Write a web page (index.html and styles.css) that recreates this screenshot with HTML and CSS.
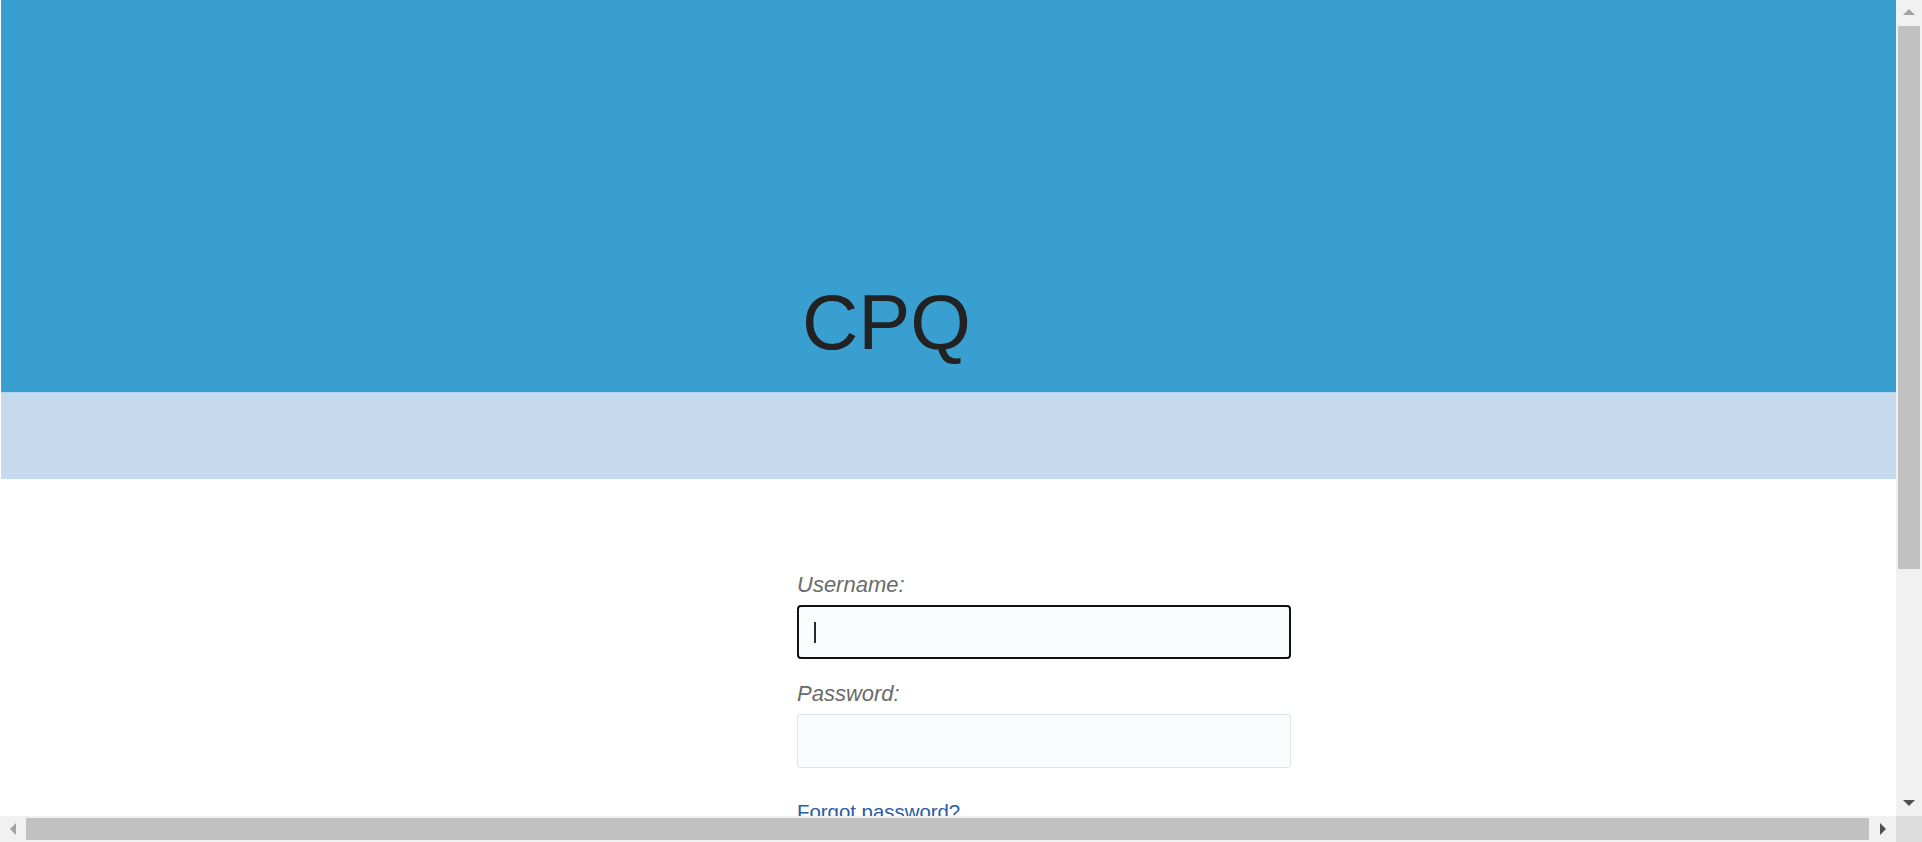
FILE: index.html
```html
<!DOCTYPE html>
<html lang="en">
<head>
<meta charset="utf-8">
<title>CPQ</title>
<link rel="stylesheet" href="styles.css">
</head>
<body>
<div class="window">
  <div class="content">
    <header class="header">
      <h1 class="brand">CPQ</h1>
    </header>
    <div class="band"></div>
    <main class="main">
      <form class="login">
        <label class="label" for="user">Username:</label>
        <div class="field-wrap">
          <input class="field focused" id="user" type="text">
          <span class="caret"></span>
        </div>
        <label class="label" for="pass">Password:</label>
        <div class="field-wrap">
          <input class="field" id="pass" type="password">
        </div>
        <a class="forgot" href="#">Forgot password?</a>
      </form>
    </main>
  </div>
  <div class="vscroll">
    <div class="sbtn"><span class="tri up"></span></div>
    <div class="vtrack"><div class="vthumb"></div></div>
    <div class="sbtn"><span class="tri down"></span></div>
  </div>
  <div class="hscroll">
    <div class="sbtn"><span class="tri left"></span></div>
    <div class="htrack"><div class="hthumb"></div></div>
    <div class="sbtn"><span class="tri right"></span></div>
  </div>
  <div class="corner"></div>
</div>
</body>
</html>
```
FILE: styles.css
```css
html, body {
  margin: 0;
  padding: 0;
  overflow: hidden;
}
body {
  font-family: "Liberation Sans", Arial, sans-serif;
  background: #ffffff;
}
.window {
  width: 1922px;
  height: 842px;
  display: grid;
  grid-template-columns: 1896px 26px;
  grid-template-rows: 816px 26px;
}
.content {
  overflow: hidden;
  padding-left: 1px;
  background: #ffffff;
}
.header {
  height: 392px;
  background: #389fd0;
  display: flex;
  flex-direction: column;
  justify-content: flex-end;
  box-sizing: border-box;
  padding: 0 0 31px 801px;
}
.brand {
  margin: 0;
  font-weight: normal;
  font-size: 78px;
  line-height: 78px;
  color: #222222;
}
.band {
  height: 87px;
  background: #c5daee;
  border-top: 1px solid #b2d6ef;
  box-sizing: border-box;
}
.main {
  padding: 94px 0 0 796px;
}
.login {
  width: 494px;
  display: flex;
  flex-direction: column;
}
.label {
  font-size: 22px;
  line-height: 24px;
  font-style: italic;
  color: #6b6b6b;
  margin-bottom: 8px;
}
.field-wrap {
  position: relative;
  height: 54px;
  margin-bottom: 23px;
}
.field {
  box-sizing: border-box;
  width: 100%;
  height: 54px;
  margin: 0;
  background: #fafcfe;
  border: 1px solid #dfe3e7;
  border-radius: 3px;
  outline: none;
  font-size: 18px;
  padding: 0 16px;
}
.field.focused {
  border: 2px solid #111111;
  border-radius: 4px;
}
.caret {
  position: absolute;
  left: 17px;
  top: 17px;
  width: 2px;
  height: 21px;
  background: #2a2a2a;
}
.forgot {
  margin-top: 9px;
  font-size: 20.4px;
  line-height: 24px;
  color: #2a5ca8;
  text-decoration: none;
}
.vscroll {
  background: #f1f1f1;
  display: flex;
  flex-direction: column;
}
.hscroll {
  background: #f1f1f1;
  display: flex;
  flex-direction: row;
}
.corner {
  background: #dcdcdc;
}
.sbtn {
  flex: 0 0 26px;
  height: 26px;
  width: 26px;
  display: flex;
  align-items: center;
  justify-content: center;
}
.vtrack {
  flex: 1;
  padding: 0 2px;
}
.vthumb {
  height: 543px;
  background: #c1c1c1;
}
.htrack {
  flex: 1;
  padding: 2px 0;
}
.hthumb {
  width: 1843px;
  height: 22px;
  background: #c1c1c1;
}
.tri {
  width: 0;
  height: 0;
  display: block;
}
.tri.up {
  border-left: 6px solid transparent;
  border-right: 6px solid transparent;
  border-bottom: 6px solid #a3a3a3;
  margin-top: -2px;
}
.tri.down {
  border-left: 6px solid transparent;
  border-right: 6px solid transparent;
  border-top: 6px solid #505050;
}
.tri.left {
  border-top: 6px solid transparent;
  border-bottom: 6px solid transparent;
  border-right: 6px solid #a3a3a3;
}
.tri.right {
  border-top: 6px solid transparent;
  border-bottom: 6px solid transparent;
  border-left: 6px solid #505050;
}
```
